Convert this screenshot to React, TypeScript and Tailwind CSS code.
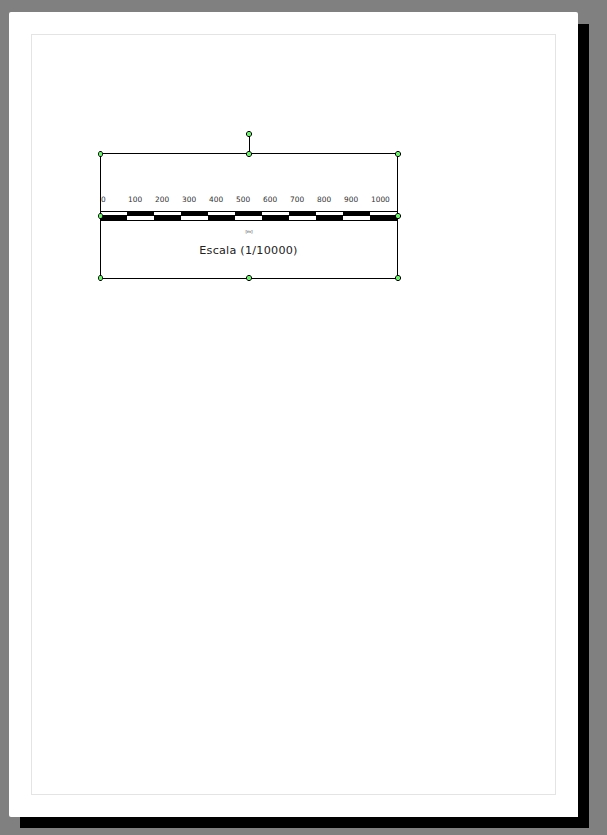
const labels = [0, 100, 200, 300, 400, 500, 600, 700, 800, 900, 1000];

const handles = [
  'left-[145px] top-[-23px] w-[6px]',
  'left-[-3px] top-[-3px] w-[5px]',
  'left-[145px] top-[-3px] w-[6px]',
  'left-[294px] top-[-3px] w-[6px]',
  'left-[-3px] top-[59px] w-[5px]',
  'left-[294px] top-[59px] w-[6px]',
  'left-[-3px] top-[121px] w-[5px]',
  'left-[145px] top-[121px] w-[6px]',
  'left-[294px] top-[121px] w-[6px]',
];

function Handle({ place }: { place: string }) {
  return (
    <svg className={`absolute h-[6px] ${place}`} viewBox="0 0 6 6" preserveAspectRatio="none">
      <path d="M2 0H4L6 2V4L4 6H2L0 4V2Z" fill="#000" />
      <path d="M2 1H4L5 2V4L4 5H2L1 4V2Z" fill="#6cf56c" />
    </svg>
  );
}

function ScaleBar() {
  return (
    <section className="relative ml-[68px] mt-[118px] flex h-[126px] w-[298px] flex-col border border-black text-[#222]">
      <div className="mt-[41px] flex h-[9px] text-[7.4px] leading-[9px] text-[#333]">
        {labels.map((value) => (
          <span key={value} className="w-[27px] shrink-0 whitespace-nowrap">
            {value}
          </span>
        ))}
      </div>
      <div className="mt-[7px] flex h-[10px] shrink-0 border-y border-black">
        {labels.map((value, i) => (
          <div
            key={value}
            className={`flex flex-col ${i === 0 ? 'w-[26px]' : 'w-[27px]'} shrink-0`}
          >
            <div className={i % 2 ? 'h-[4px] bg-black' : 'h-[3px] bg-white'} />
            <div className={i % 2 ? 'h-[4px] bg-white' : 'h-[5px] bg-black'} />
          </div>
        ))}
      </div>
      <div className="mt-[8px] h-[6px] text-center text-[4px] leading-[6px] text-[#222]">[m]</div>
      <div className="mt-[8px] pr-px text-center text-[11.2px] leading-[16px] tracking-[0.24px]">Escala (1/10000)</div>
      <div className="absolute left-[148px] top-[-20px] h-[20px] w-px bg-black" />
      {handles.map((place) => (
        <Handle key={place} place={place} />
      ))}
    </section>
  );
}

export default function App() {
  return (
    <main className="h-[835px] w-[607px] overflow-hidden bg-[#808080] pl-[9px] pt-[12px] font-['DejaVu_Sans',Verdana,sans-serif]">
      <div className="relative h-[805px] w-[569px]">
        <div className="absolute left-[11px] top-[12px] h-[804px] w-[569px] bg-black" />
        <div className="relative h-full rounded-tl-[2px] rounded-tr-[2px] rounded-bl-[2px] bg-white p-[22px]">
          <div className="flow-root h-[761px] w-[525px] border border-[#e4e4e4]">
            <ScaleBar />
          </div>
        </div>
      </div>
    </main>
  );
}
